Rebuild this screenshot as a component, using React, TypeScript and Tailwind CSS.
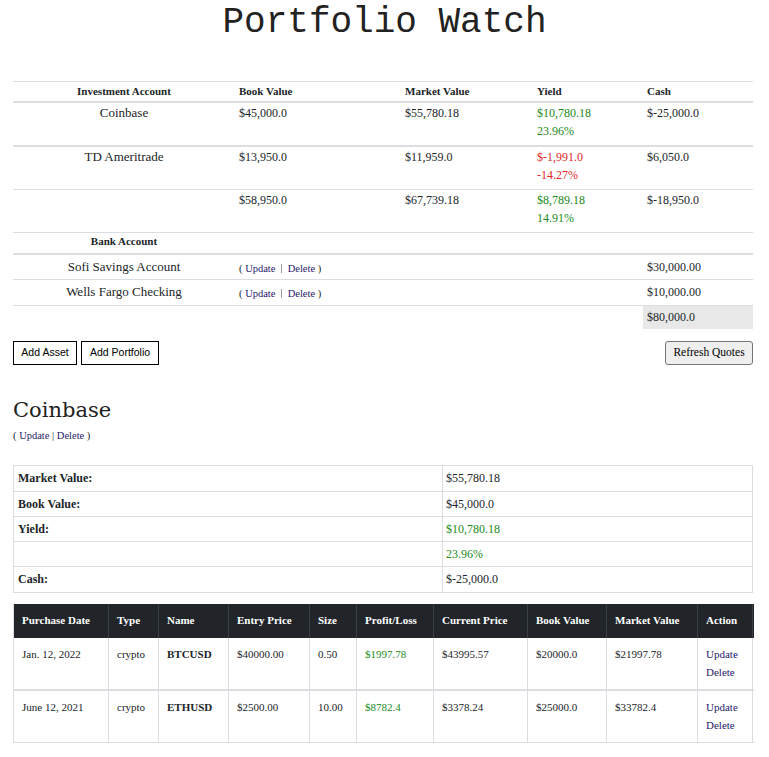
import React from "react";

const serif = { fontFamily: '"Liberation Serif", "Times New Roman", serif' };
const GREEN = "text-[#228b22]";
const RED = "text-[#e3281f]";
const LINK = "text-[#1f1a6b]";

const topCols = "grid grid-cols-[222px_166px_132px_110px_110px]";

function Actions() {
  return (
    <span className="text-[10.5px] text-[#222]">
      ( <span className={LINK}>Update</span>{" "}
      <span className="inline-block w-[1px] h-[9px] bg-[#9a9a9a] align-[-1px] mx-[3px]" />{" "}
      <span className={LINK}>Delete</span> )
    </span>
  );
}

function TopTable() {
  const invRows = [
    { name: "Coinbase", book: "$45,000.0", market: "$55,780.18", y1: "$10,780.18", y2: "23.96%", pos: true, cash: "$-25,000.0", b: "border-b-2" },
    { name: "TD Ameritrade", book: "$13,950.0", market: "$11,959.0", y1: "$-1,991.0", y2: "-14.27%", pos: false, cash: "$6,050.0", b: "border-b" },
    { name: "", book: "$58,950.0", market: "$67,739.18", y1: "$8,789.18", y2: "14.91%", pos: true, cash: "$-18,950.0", b: "border-b" },
  ];
  return (
    <div className="w-[740px] text-[#212529]" style={serif}>
      <div className={`${topCols} h-[22px] border-t border-b-2 border-[#dcdde1] text-[11px] font-bold items-center`}>
        <div className="text-center">Investment Account</div>
        <div className="pl-[4px]">Book Value</div>
        <div className="pl-[4px]">Market Value</div>
        <div className="pl-[4px]">Yield</div>
        <div className="pl-[4px]">Cash</div>
      </div>
      {invRows.map((r, i) => (
        <div
          key={i}
          className={`${topCols} ${i === 0 ? "h-[44px]" : "h-[43px]"} ${r.b} border-[#dcdde1] leading-[18px] pt-[1px]`}
        >
          <div className="text-center text-[13px]">{r.name}</div>
          <div className="pl-[4px] text-[12px]">{r.book}</div>
          <div className="pl-[4px] text-[12px]">{r.market}</div>
          <div className={`pl-[4px] text-[12px] ${r.pos ? GREEN : RED}`}>
            <div>{r.y1}</div>
            <div>{r.y2}</div>
          </div>
          <div className="pl-[4px] text-[12px]">{r.cash}</div>
        </div>
      ))}
      <div className={`${topCols} h-[22px] border-b-2 border-[#dcdde1] text-[11px] font-bold items-center pb-[3px]`}>
        <div className="text-center">Bank Account</div>
        <div />
        <div />
        <div />
        <div />
      </div>
      {[
        { name: "Sofi Savings Account", cash: "$30,000.00", h: "h-[25px]" },
        { name: "Wells Fargo Checking", cash: "$10,000.00", h: "h-[26px]" },
      ].map((r, i) => (
        <div key={i} className={`${topCols} ${r.h} border-b border-[#dcdde1] items-center pb-[6px]`}>
          <div className="text-center text-[13px]">{r.name}</div>
          <div className="pl-[4px]">
            <Actions />
          </div>
          <div />
          <div />
          <div className="pl-[4px] text-[12px]">{r.cash}</div>
        </div>
      ))}
      <div className={`${topCols} h-[23px]`}>
        <div />
        <div />
        <div />
        <div />
        <div className="bg-[#e8e8e8] pl-[4px] text-[12px] flex items-center pb-[1px]">$80,000.0</div>
      </div>
    </div>
  );
}

function Summary() {
  const rows: { label: string; value: string; cls?: string; h: string }[] = [
    { label: "Market Value:", value: "$55,780.18", h: "h-[26px]" },
    { label: "Book Value:", value: "$45,000.0", h: "h-[25px]" },
    { label: "Yield:", value: "$10,780.18", cls: GREEN, h: "h-[25px]" },
    { label: "", value: "23.96%", cls: GREEN, h: "h-[25px]" },
    { label: "Cash:", value: "$-25,000.0", h: "h-[26px]" },
  ];
  return (
    <div className="w-[740px] border-t border-l border-[#dcdde1] text-[#212529]" style={serif}>
      {rows.map((r, i) => (
        <div key={i} className={`grid grid-cols-[429px_310px] ${r.h}`}>
          <div className="border-r border-b border-[#dcdde1] pl-[4px] flex items-center text-[12px] font-bold pb-[1px]">
            {r.label}
          </div>
          <div className={`border-r border-b border-[#dcdde1] pl-[3px] flex items-center text-[12px] pb-[1px] ${r.cls ?? ""}`}>
            {r.value}
          </div>
        </div>
      ))}
    </div>
  );
}

const botCols = "grid grid-cols-[95px_50px_70px_81px_47px_77px_94px_79px_91px_55px]";

function Positions() {
  const heads = ["Purchase Date", "Type", "Name", "Entry Price", "Size", "Profit/Loss", "Current Price", "Book Value", "Market Value", "Action"];
  const rows = [
    ["Jan. 12, 2022", "crypto", "BTCUSD", "$40000.00", "0.50", "$1997.78", "$43995.57", "$20000.0", "$21997.78"],
    ["June 12, 2021", "crypto", "ETHUSD", "$2500.00", "10.00", "$8782.4", "$3378.24", "$25000.0", "$33782.4"],
  ];
  return (
    <div className="w-[741px] border-l border-[#dcdde1] text-[11px] text-[#212529]" style={serif}>
      <div className={`${botCols} bg-[#212529] text-white font-bold h-[34px]`}>
        {heads.map((h) => (
          <div key={h} className="border-r border-[#3a3f44] px-[8px] flex items-center pb-[2px]">
            {h}
          </div>
        ))}
      </div>
      {rows.map((r, i) => (
        <div key={i} className={`${botCols} ${i === 0 ? "h-[53px] border-b-2" : "h-[52px] border-b"} border-[#dcdde1]`}>
          {r.map((c, j) => (
            <div
              key={j}
              className={`border-r border-[#dcdde1] px-[8px] pt-[7px] leading-[18px] ${j === 2 ? "font-bold" : ""} ${j === 5 ? GREEN : ""}`}
            >
              {c}
            </div>
          ))}
          <div className={`border-r border-[#dcdde1] px-[8px] pt-[7px] leading-[18px] ${LINK}`}>
            <div>Update</div>
            <div>Delete</div>
          </div>
        </div>
      ))}
    </div>
  );
}

export default function App() {
  return (
    <div className="bg-white min-h-[757px] w-[769px] px-[13px] text-[#212529]">
      <h1
        className="text-center text-[36px] leading-[40px] mt-[3px] text-[#222]"
        style={{ fontFamily: '"Liberation Mono", "Courier New", monospace' }}
      >
        Portfolio Watch
      </h1>
      <div className="mt-[38px]">
        <TopTable />
      </div>
      <div className="mt-[12px] flex justify-between w-[740px] h-[24px]">
        <div className="flex gap-[4px]" style={{ fontFamily: '"Liberation Sans", Arial, sans-serif' }}>
          <button className="h-[24px] w-[64px] border border-black bg-white text-[10.5px] text-black">Add Asset</button>
          <button className="h-[24px] w-[78px] border border-black bg-white text-[10.5px] text-black">Add Portfolio</button>
        </div>
        <button
          className="h-[24px] w-[88px] border border-[#767676] rounded-[3px] bg-[#efefef] text-[11.5px] text-black"
          style={serif}
        >
          Refresh Quotes
        </button>
      </div>
      <h2
        className="mt-[33px] text-[21px] leading-[24px] text-[#222]"
        style={{ fontFamily: '"DejaVu Serif", serif' }}
      >
        Coinbase
      </h2>
      <div className="mt-[7px] text-[10.5px] leading-[14px]" style={serif}>
        ( <span className={LINK}>Update</span> | <span className={LINK}>Delete</span> )
      </div>
      <div className="mt-[22px]">
        <Summary />
      </div>
      <div className="mt-[11px]">
        <Positions />
      </div>
    </div>
  );
}
